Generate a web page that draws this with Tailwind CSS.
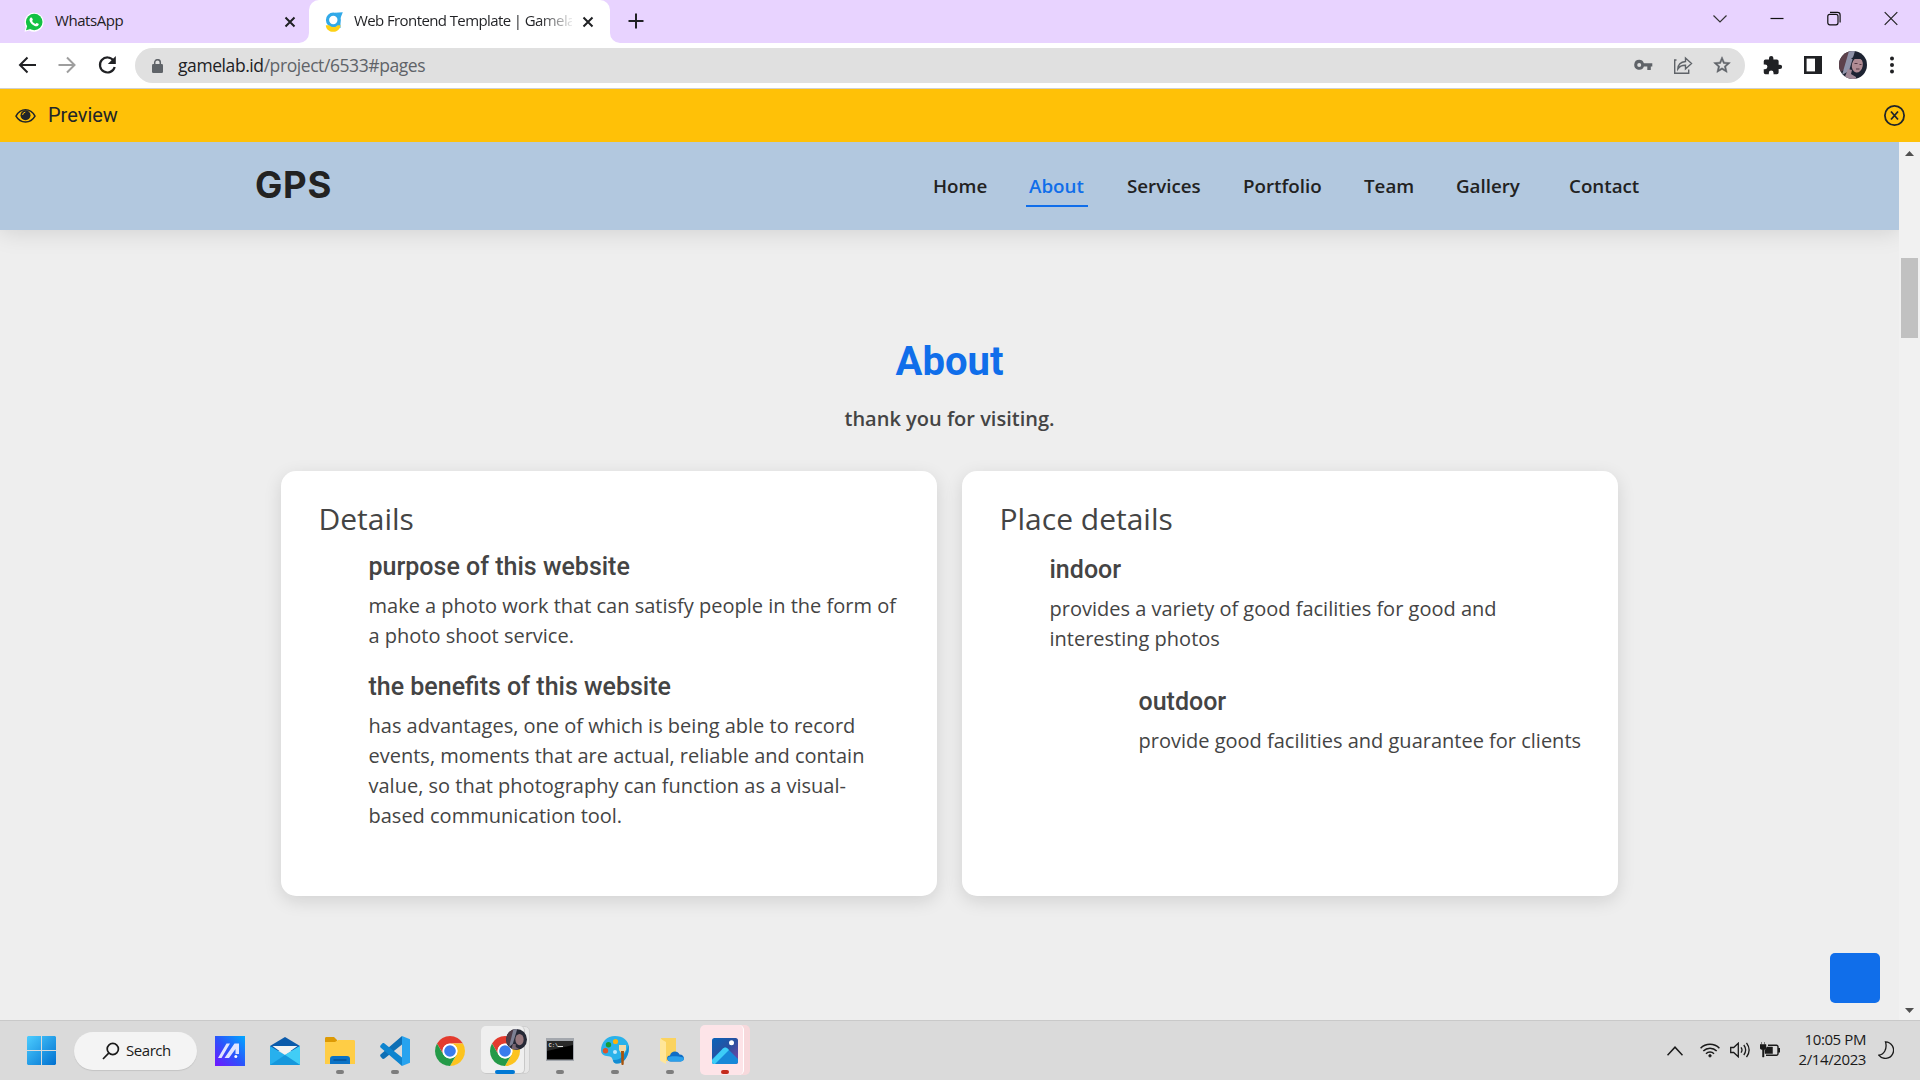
<!DOCTYPE html>
<html lang="en">
<head>
<meta charset="utf-8">
<title>Web Frontend Template | Gamelab</title>
<script src="https://cdn.jsdelivr.net/npm/@tailwindcss/browser@4"></script>
</head>
<body class="w-[1920px] h-[1080px] overflow-hidden flex flex-col bg-[#eeeeee] font-['Open_Sans',sans-serif] text-[#444444]">

<!-- Tab strip -->
<header class="h-[43px] shrink-0 bg-[#e8d3ff] flex text-[#1f2124] text-[15px] tracking-[-0.6px]">
  <div class="w-[309px] flex items-center pl-6 pr-[13px]">
    <svg class="size-5 shrink-0" viewBox="0 0 20 20"><path d="M.5 19.700 1.800 14.800A9.500 9.500 0 1 1 5.300 18.400Z" fill="#fff"/><circle cx="10.200" cy="10" r="8.300" fill="#12c143"/><path d="M2 18.300 3.300 13.500 6.500 16.900Z" fill="#12c143"/><path d="M6.300 5.900c.6-.7 1.500-.6 1.800 0l.7 1.600c.2.500-.7 1.200-.6 1.500.6 1.300 1.700 2.300 3.100 2.900.5.100 1-1.200 1.500-.9l1.700.8c.7.400-.1 2.200-1.500 2.500-2.600.5-7.500-3.300-7.500-6.600 0-.7.300-1.300.8-1.800Z" fill="#fff"/></svg>
    <span class="ml-[11px] flex-1 pb-[2px] tracking-[-0.45px]">WhatsApp</span>
    <svg class="size-3" viewBox="0 0 12 12" fill="none" stroke="#202124" stroke-width="2"><path d="m1.500 1.500 9 9m0-9-9 9"/></svg>
  </div>
  <div class="relative w-[301px] bg-white rounded-t-[10px] flex items-center pl-4 pr-4">
    <svg class="absolute -left-[10px] bottom-0 size-[10px]" viewBox="0 0 10 10"><path d="M10 0v10H0A10 10 0 0 0 10 0Z" fill="#fff"/></svg>
    <svg class="absolute -right-[10px] bottom-0 size-[10px]" viewBox="0 0 10 10"><path d="M0 0v10h10A10 10 0 0 1 0 0Z" fill="#fff"/></svg>
    <svg class="w-[18px] h-5 shrink-0" viewBox="0 0 18 20"><circle cx="8.300" cy="8" r="5.800" fill="none" stroke="#31a9e8" stroke-width="3.200"/><path d="M10 .8 17.800.3 15.500 6 13 3Z" fill="#31a9e8"/><path d="M13 4h2.500v12H13Z" fill="#31a9e8"/><path d="M.8 13.200h3.400c2.400 2.500 6.400 2.500 8.600 0h2.700c-.2 4-3.400 6.600-7.300 6.600S1 17.300.8 13.200Z" fill="#fdd116"/></svg>
    <span class="ml-[11px] w-[219px] pb-[2px] overflow-hidden whitespace-nowrap bg-linear-to-r from-[#202124] from-85% to-[#202124]/10 bg-clip-text text-transparent">Web Frontend Template | Gamela</span>
    <svg class="ml-[10px] size-3 shrink-0" viewBox="0 0 12 12" fill="none" stroke="#202124" stroke-width="2"><path d="m1.500 1.500 9 9m0-9-9 9"/></svg>
  </div>
  <svg class="ml-[18px] mt-[13px] size-4" viewBox="0 0 16 16" stroke="#202124" stroke-width="2"><path d="M8 .5v15M.5 8h15"/></svg>
  <div class="ml-auto flex pt-[11px] pr-[22px] gap-[43px]">
    <svg class="w-[14px] h-4" viewBox="0 0 14 16" fill="none" stroke="#333" stroke-width="1.200"><path d="m.5 4.500 6.500 6.500 6.500-6.500"/></svg>
    <svg class="w-[14px] h-4" viewBox="0 0 14 16" stroke="#111" stroke-width="1.200"><path d="M.5 7.500h13"/></svg>
    <svg class="w-[14px] h-4" viewBox="0 0 14 16" fill="none" stroke="#111" stroke-width="1.200"><rect x=".8" y="3.300" width="10.200" height="10.500" rx="2"/><path d="M3 1.300h7.500a2.600 2.600 0 0 1 2.600 2.600V11.500"/></svg>
    <svg class="w-[14px] h-4" viewBox="0 0 14 16" stroke="#222" stroke-width="1.200"><path d="m.7 1.200 12.600 12.600m0-12.600L.7 13.800"/></svg>
  </div>
</header>

<!-- Address bar -->
<div class="h-[46px] shrink-0 bg-white border-b border-[#cfcfcf] flex items-center pl-[17px] pr-[25px] pb-[1px]">
  <svg class="size-5" viewBox="0 0 20 20" fill="none" stroke="#202124" stroke-width="2"><path d="M19 10H3.500M10.500 2.500 3 10l7.500 7.500"/></svg>
  <svg class="ml-5 size-5" viewBox="0 0 20 20" fill="none" stroke="#9e9e9e" stroke-width="2"><path d="M1.500 10H17M10 2.500l7.500 7.500-7.500 7.500"/></svg>
  <svg class="ml-5 size-5" viewBox="0 0 20 20"><path d="M16.500 5.500A7.500 7.500 0 1 0 17.700 12" fill="none" stroke="#202124" stroke-width="2.200"/><path d="M18.800 1v8h-8Z" fill="#202124"/></svg>
  <div class="ml-[18px] w-[1610px] h-[35px] rounded-full bg-[#e0e0e0] flex items-center pl-[17px] pr-[13px]">
    <svg class="w-[11px] h-[14px] mt-[1px]" viewBox="0 0 11 14"><path d="M2.700 6V3.500a2.800 2.800 0 0 1 5.600 0V6" fill="none" stroke="#5f6368" stroke-width="1.500"/><rect y="5" width="11" height="9" rx="1.200" fill="#5f6368"/></svg>
    <span class="ml-[15px] pt-[1px] text-[17.500px] tracking-[-0.42px] text-[#202124]">gamelab.id<span class="text-[#5f6368]">/project/6533#pages</span></span>
    <svg class="ml-auto w-[19px] h-5" viewBox="0 0 19 20"><path fill-rule="evenodd" d="M5.200 4.800a5 5 0 0 1 4.700 3.400H18.300v3.400h-1.500V15h-3.500v-3.400H9.900A5 5 0 1 1 5.200 4.800Zm0 3.200a2 2 0 1 0 0 4 2 2 0 0 0 0-4Z" fill="#5f6368"/></svg>
    <svg class="ml-5 w-5 h-5" viewBox="0 0 20 20" fill="none" stroke="#5f6368" stroke-width="1.400"><path d="M3.500 5H1.700v13.200h14V14.500"/><path d="M12.500 3v3.500C8 7 5 9.500 4.800 14c2-3 4.500-3.800 7.700-3.700V14l6-5.500Z"/></svg>
    <svg class="ml-[19px] size-5" viewBox="0 0 24 24" fill="#5f6368"><path d="m22 9.240-7.190-.62L12 2 9.190 8.630 2 9.240l5.460 4.730L5.820 21 12 17.270 18.180 21l-1.630-7.030L22 9.240ZM12 15.400l-3.760 2.270 1-4.280-3.320-2.880 4.380-.38L12 6.100l1.710 4.040 4.380.38-3.320 2.880 1 4.280L12 15.400Z" stroke="#5f6368" stroke-width=".6"/></svg>
  </div>
  <svg class="ml-[17px] size-[21px]" viewBox="0 0 24 24" fill="#202124"><path d="M20.500 11H19V7a2 2 0 0 0-2-2h-4V3.500a2.500 2.500 0 0 0-5 0V5H4a2 2 0 0 0-2 2v3.800h1.500a2.700 2.700 0 0 1 0 5.400H2V20a2 2 0 0 0 2 2h3.800v-1.500a2.700 2.700 0 0 1 5.400 0V22H17a2 2 0 0 0 2-2v-4h1.500a2.500 2.500 0 0 0 0-5Z"/></svg>
  <svg class="ml-[21px] w-[18px] h-[18px]" viewBox="0 0 18 18"><rect x="1.300" y="1.300" width="15.400" height="15.400" fill="none" stroke="#202124" stroke-width="2.600"/><rect x="11" width="7" height="18" fill="#202124"/></svg>
  <svg class="ml-[17px] size-7" viewBox="0 0 28 28"><defs><clipPath id="av"><circle cx="14" cy="14" r="14"/></clipPath></defs><g clip-path="url(#av)"><rect width="28" height="28" fill="#1d2332"/><path d="M0 0h15L8 17 0 22Z" fill="#5d414b"/><path d="M10 0h6L10 20 3 24Z" fill="#8f92a8"/><ellipse cx="18.500" cy="14" rx="5.500" ry="7.500" fill="#b08b93" transform="rotate(10 18 13)"/><path d="M12 8Q18 1 25 9L21 8 16 8Z" fill="#1d2332"/><path d="M5 28 9 18l4 1-1 4 5 3v2Z" fill="#a08896"/><path d="M15.500 12.500h3m2 1h2M17 18h3.500" stroke="#553943" stroke-width="1.200"/></g></svg>
  <svg class="ml-auto w-[6px] h-[18px]" viewBox="0 0 6 18" fill="#202124"><circle cx="3" cy="2.500" r="2"/><circle cx="3" cy="9" r="2"/><circle cx="3" cy="15.500" r="2"/></svg>
</div>

<!-- Preview banner -->
<div class="h-[53px] shrink-0 bg-[#ffc107] flex items-center pl-[15px] pr-[15px] text-[#212529]">
  <svg class="w-[21px] h-4" viewBox="0 0 21 16"><path d="M1 8.200C5.500-.3 15.500-.3 20 8.200 15.500 16 5.500 16 1 8.200Z" fill="none" stroke="#212529" stroke-width="1.500"/><circle cx="10.500" cy="7.300" r="5" fill="#212529"/><path d="M7.600 7a3 3 0 0 1 2.700-2.800" fill="none" stroke="#ffc107" stroke-width="1"/></svg>
  <span class="ml-[12px] pb-[2px] font-['Roboto',sans-serif] text-[20px]">Preview</span>
  <svg class="ml-auto size-[21px]" viewBox="0 0 21 21" fill="none" stroke="#212529" stroke-width="1.800"><circle cx="10.500" cy="10.500" r="9.600"/><path d="m7 6.500 7 8m0-8-7 8"/></svg>
</div>

<!-- Previewed site -->
<div class="h-[878px] shrink-0 flex">
  <div class="relative w-[1899px] overflow-hidden flex flex-col">
    <nav class="h-[88px] shrink-0 bg-[#b2c8df] shadow-[0_0_24px_rgba(0,0,0,0.15)] flex items-center pl-[255px] text-[#222222]">
      <div class="w-[678px] pb-[2px] font-['Inter',sans-serif] font-bold text-[36.500px] leading-none tracking-[0.7px]">GPS</div>
      <div class="flex h-[50px] items-start text-[18.750px] font-semibold leading-[50px] whitespace-nowrap">
        <a class="w-[96px]">Home</a>
        <a class="relative w-[98px] text-[#106eea]">About<span class="absolute -left-[3px] top-[44px] w-[62px] h-[2px] bg-[#106eea]"></span></a>
        <a class="w-[116px]">Services</a>
        <a class="w-[121px]">Portfolio</a>
        <a class="w-[92px]">Team</a>
        <a class="w-[113px]">Gallery</a>
        <a>Contact</a>
      </div>
    </nav>
    <main class="flex-1 flex flex-col items-center pt-[108px]">
      <h2 class="font-['Roboto',sans-serif] font-bold text-[40px] leading-[48px] text-[#106eea]">About</h2>
      <p class="mt-[18px] text-[20px] leading-[30px] font-semibold">thank you for visiting.</p>
      <div class="mt-[37px] flex gap-[25px]">
        <section class="w-[656px] h-[425px] rounded-[15px] bg-white shadow-[0_5px_18px_rgba(0,0,0,0.12)] pl-[37.500px] pt-[30px]">
          <h3 class="text-[30px] leading-[36px]">Details</h3>
          <div class="pl-[50px] pt-[15px] w-[592px]">
            <h4 class="font-['Roboto',sans-serif] font-medium text-[25px] leading-[30px]">purpose of this website</h4>
            <p class="mt-[9px] text-[20px] leading-[30px] whitespace-nowrap">make a photo work that can satisfy people in the form of<br>a photo shoot service.</p>
            <h4 class="mt-[21px] font-['Roboto',sans-serif] font-medium text-[25px] leading-[30px]">the benefits of this website</h4>
            <p class="mt-[9px] text-[20px] leading-[30px] whitespace-nowrap">has advantages, one of which is being able to record<br>events, moments that are actual, reliable and contain<br>value, so that photography can function as a visual-<br>based communication tool.</p>
          </div>
        </section>
        <section class="w-[656px] h-[425px] rounded-[15px] bg-white shadow-[0_5px_18px_rgba(0,0,0,0.12)] pl-[37.500px] pt-[30px]">
          <h3 class="text-[30px] leading-[36px]">Place details</h3>
          <div class="pl-[50px] pt-[18px]">
            <h4 class="font-['Roboto',sans-serif] font-medium text-[25px] leading-[30px]">indoor</h4>
            <p class="mt-[9px] text-[20px] leading-[30px] whitespace-nowrap">provides a variety of good facilities for good and<br>interesting photos</p>
            <div class="pl-[89px] pt-[33px]">
              <h4 class="font-['Roboto',sans-serif] font-medium text-[25px] leading-[30px]">outdoor</h4>
              <p class="mt-[9px] text-[20px] leading-[30px] whitespace-nowrap">provide good facilities and guarantee for clients</p>
            </div>
          </div>
        </section>
      </div>
    </main>
    <div class="absolute right-[19px] bottom-[17px] size-[50px] rounded-[5px] bg-[#106eea]"></div>
  </div>
  <div class="w-[21px] bg-[#f1f1f1] flex flex-col items-center pt-[9px] pb-[7px]">
    <svg class="w-[9px] h-[5px]" viewBox="0 0 9 5"><path d="M0 5 4.500 0 9 5Z" fill="#505050"/></svg>
    <div class="mt-[102px] w-[17px] h-20 bg-[#c1c1c1]"></div>
    <svg class="mt-auto w-[9px] h-[5px]" viewBox="0 0 9 5"><path d="M0 0h9L4.500 5Z" fill="#505050"/></svg>
  </div>
</div>

<!-- Taskbar -->
<footer class="h-[60px] shrink-0 bg-[#dadada] border-t border-[#c9c9c9] flex items-center text-[#1a1a1a]">
  <svg class="ml-[27px] size-[29px]" viewBox="0 0 29 29"><defs><linearGradient id="w" x1="0" y1="0" x2="29" y2="29" gradientUnits="userSpaceOnUse"><stop stop-color="#4ccdff"/><stop offset="1" stop-color="#0070d0"/></linearGradient></defs><path fill="url(#w)" d="M1 0h13v14H0V1ZM15 0h13l1 1v13H15ZM0 15h14v14H1l-1-1ZM15 15h14v13l-1 1H15Z"/></svg>
  <div class="ml-[18px] w-[123px] h-[38px] rounded-full bg-[#f4f4f4] shadow-[0_1px_1px_rgba(0,0,0,0.1)] flex items-center pl-[28px]">
    <svg class="size-[18px]" viewBox="0 0 18 18" fill="none" stroke="#1a1a1a" stroke-width="1.700"><circle cx="10.800" cy="7" r="5.600"/><path d="M6.700 11.200 1 17"/></svg>
    <span class="ml-[6px] text-[15px] tracking-[-0.45px]">Search</span>
  </div>
  <div class="ml-[5.500px] flex h-[59px] items-center">
    <div class="relative w-[55px] h-[59px] flex items-center justify-center">
      <svg class="size-[30px]" viewBox="0 0 30 30"><defs><linearGradient id="ma" x1="0" y1="1" x2="1" y2="0"><stop stop-color="#7114ff"/><stop offset=".5" stop-color="#2a55fb"/><stop offset="1" stop-color="#00a8ff"/></linearGradient></defs><rect width="30" height="30" fill="url(#ma)"/><path d="M3 22 11.500 7.500H15L6.500 22ZM9.500 22 19.500 7.500H24V18h-3.500v-5L14 22ZM12 7.500" fill="#e0e4ff"/><circle cx="20.800" cy="20.500" r="1.500" fill="#fff"/></svg>
    </div>
    <div class="relative w-[55px] h-[59px] flex items-center justify-center">
      <svg class="w-[30px] h-7" viewBox="0 0 30 28"><path d="M0 9 15 0l15 9v5H0Z" fill="#0b5bab"/><path d="M2.500 9h25L15 18Z" fill="#f3f3f3"/><path d="M0 9v19h30V9L15 18Z" fill="#27b0ee"/><path d="M30 9v19L15 18Z" fill="#41cdf6"/><path d="M0 28h30L15 18Z" fill="#1697dc"/></svg>
    </div>
    <div class="relative w-[55px] h-[59px] flex items-center justify-center">
      <svg class="w-[30px] h-[27px]" viewBox="0 0 30 27"><path d="M0 1.500C0 .5.500 0 1.500 0H9l3 3v4H0Z" fill="#dd9a05"/><path d="M0 5h10l3-2h15.500c1 0 1.500.5 1.500 1.500V27H0Z" fill="#ffcd45"/><path d="M5 27v-5c0-2 1-3 3-3h14c2 0 3 1 3 3v5Z" fill="#0b72c6"/><path d="M8.500 23h13" stroke="#064d8f" stroke-width="1.300"/></svg>
      <span class="absolute bottom-[6px] w-2 h-1 rounded-full bg-[#7d7d7d]"></span>
    </div>
    <div class="relative w-[55px] h-[59px] flex items-center justify-center">
      <svg class="size-[30px]" viewBox="0 0 30 30"><path d="M22 8.500 4.500 22.500C3.500 23.300 2.500 23 1.800 22L.5 20.500c-.5-.8-.5-1.500.3-2.200L22 0Z" fill="#0e6fb5"/><path d="M22 21.500 4.500 7.500C3.500 6.700 2.500 7 1.800 8L.5 9.500c-.5.8-.5 1.500.3 2.200L22 30Z" fill="#0e84cf"/><path d="M22 0 30 3.300v23.400L22 30Z" fill="#27a3ef"/></svg>
      <span class="absolute bottom-[6px] w-2 h-1 rounded-full bg-[#7d7d7d]"></span>
    </div>
    <div class="relative w-[55px] h-[59px] flex items-center justify-center">
      <svg class="size-[30px]" viewBox="0 0 48 48"><circle cx="24" cy="24" r="23" fill="#fff"/><path d="M24 12h20.780A24 24 0 0 0 3.220 12l10.390 18A12 12 0 0 1 24 12Z" fill="#e33b2e"/><path d="M34.390 30 24 48a24 24 0 0 0 20.780-36H24a12 12 0 0 1 10.390 18Z" fill="#fcc31e"/><path d="M13.610 30 3.220 12A24 24 0 0 0 24 48l10.390-18a12 12 0 0 1-20.780 0Z" fill="#249a48"/><circle cx="24" cy="24" r="11.800" fill="#fff"/><circle cx="24" cy="24" r="9.300" fill="#3a7cec"/></svg>
    </div>
    <div class="relative w-[55px] h-[59px] flex items-center justify-center">
      <span class="absolute left-[5px] top-[5px] w-[47px] h-[48px] rounded-[5px] bg-[#e7e7e7] border border-[#cfcfcf]"></span>
      <span class="absolute left-[3px] top-[5px] w-[44px] h-[48px] rounded-[5px] bg-[#efefef] border-r border-b border-[#c8c8c8]"></span>
      <svg class="relative size-[30px]" viewBox="0 0 48 48"><circle cx="24" cy="24" r="23" fill="#fff"/><path d="M24 12h20.780A24 24 0 0 0 3.220 12l10.390 18A12 12 0 0 1 24 12Z" fill="#e33b2e"/><path d="M34.390 30 24 48a24 24 0 0 0 20.780-36H24a12 12 0 0 1 10.390 18Z" fill="#fcc31e"/><path d="M13.610 30 3.220 12A24 24 0 0 0 24 48l10.390-18a12 12 0 0 1-20.780 0Z" fill="#249a48"/><circle cx="24" cy="24" r="11.800" fill="#fff"/><circle cx="24" cy="24" r="9.300" fill="#3a7cec"/></svg>
      <svg class="absolute left-[28px] top-[8px] size-[21px]" viewBox="0 0 28 28"><g clip-path="url(#av)"><rect width="28" height="28" fill="#262936"/><path d="M0 0h12L6 20 0 22Z" fill="#4f3d48"/><path d="M10 0h5L9 20 4 24Z" fill="#7d8094"/><ellipse cx="18" cy="14" rx="5.500" ry="7.500" fill="#97787e"/><path d="M7 28 9 20l4 0v4l5 3Z" fill="#74636f"/></g></svg>
      <span class="absolute left-[17px] bottom-[6px] w-5 h-1 rounded-full bg-[#0078d4]"></span>
    </div>
    <div class="relative w-[55px] h-[59px] flex items-center justify-center">
      <svg class="w-7 h-[23px] mb-[2px]" viewBox="0 0 28 23"><rect width="28" height="23" fill="#a4a8ae"/><rect x="1" y="3" width="26" height="18.500" fill="#000"/><path d="M1 3h26v4L1 13Z" fill="#292929"/><text x="2.500" y="8.500" font-family="Liberation Mono" font-size="5.500" font-weight="bold" fill="#ddd">C:\</text><path d="M12 8.500h5" stroke="#ddd"/></svg>
      <span class="absolute bottom-[6px] w-2 h-1 rounded-full bg-[#7d7d7d]"></span>
    </div>
    <div class="relative w-[55px] h-[59px] flex items-center justify-center">
      <svg class="w-7 h-[29px]" viewBox="0 0 28 29"><path d="M14 0c8 0 14 4.500 14 12 0 8-5 15.500-12 15.500-5 0-3.500-5-6-6.500S0 21 0 14.500C0 6 6 0 14 0Z" fill="#2ab2ea"/><path d="M27.500 9c1.500 8-3 18.500-11.500 18.500-3 0-3.600-1.700-4-3.500 7 1 13-5 15.500-15Z" fill="#148cd2"/><circle cx="7.500" cy="8.700" r="2.700" fill="#169b36"/><circle cx="14.500" cy="5.500" r="2.600" fill="#fbb30d"/><circle cx="4.500" cy="14.700" r="2.700" fill="#d9542b"/><circle cx="14" cy="16" r="2" fill="#bfe9fb"/><path d="M18 9h7v5l-2 3h-3l-2-3Z" fill="#f0d9a8"/><path d="M20 15h3l-.3 13c0 1.300-2.300 1.300-2.300 0Z" fill="#a8540d"/></svg>
      <span class="absolute bottom-[6px] w-2 h-1 rounded-full bg-[#7d7d7d]"></span>
    </div>
    <div class="relative w-[55px] h-[59px] flex items-center justify-center">
      <svg class="w-6 h-[26px] ml-[3px]" viewBox="0 0 24 26"><path d="M1 0h15v23H6Z" fill="#fbd35f"/><path d="M0 .5 6 4v22L.8 23C.3 22.700 0 22 0 21.500Z" fill="#ffe699"/><path d="M11 23.500c-5 0-5-6-1-6 1-5 8-5 9.500-1 5.500 0 6 7 1 7Z" fill="#0f6dc6"/><path d="M11 23.500c-3 0-4-2.500-3-4 4-2 10-1 15.500 0 .8 2-.5 4-3 4Z" fill="#2ba0ea"/></svg>
      <span class="absolute bottom-[6px] w-2 h-1 rounded-full bg-[#7d7d7d]"></span>
    </div>
    <div class="relative w-[55px] h-[59px] flex items-center justify-center">
      <span class="absolute left-[8px] top-[4px] w-[44px] h-[50px] rounded-[5px] bg-[#f7d9dc]"></span>
      <span class="absolute left-[2px] top-[4px] w-[44px] h-[50px] rounded-[5px] bg-[#fde4e8] border-r border-white"></span>
      <svg class="relative size-[26px]" viewBox="0 0 26 26"><defs><linearGradient id="ph" x1="0" y1="0" x2="1" y2="1"><stop stop-color="#0963ba"/><stop offset=".5" stop-color="#29509f"/><stop offset="1" stop-color="#8046a8"/></linearGradient><clipPath id="pc"><rect width="26" height="26" rx="2.500"/></clipPath></defs><g clip-path="url(#pc)"><rect width="26" height="26" fill="url(#ph)"/><path d="M-1 22 11 10.500c1.500-1.500 3-1.500 4.500 0L27 22v5H-1Z" fill="#1788d8"/><path d="M0 22 11 10.500c1.500-1.500 3-1.500 4.500 0L17 12 3 26H0Z" fill="#3dcdf7"/><circle cx="19.500" cy="4.800" r="2.500" fill="#fff"/></g></svg>
      <span class="absolute bottom-[6px] w-2 h-1 rounded-full bg-[#c42b1c]"></span>
    </div>
  </div>
  <div class="ml-auto flex items-center h-[59px]">
    <svg class="w-4 h-[10px]" viewBox="0 0 16 10" fill="none" stroke="#1a1a1a" stroke-width="1.500"><path d="m.5 9.200 7.500-8 7.500 8"/></svg>
    <svg class="ml-[17px] mb-[1px] w-5 h-4" viewBox="0 0 20 16" fill="none" stroke="#1a1a1a" stroke-width="1.500"><path d="M.6 6.200a13.200 13.200 0 0 1 18.800 0M3.300 9a9.400 9.400 0 0 1 13.400 0M6 11.700a5.600 5.600 0 0 1 8 0"/><circle cx="10" cy="13.800" r="1.300" fill="#1a1a1a" stroke-width=".6"/></svg>
    <svg class="ml-[10px] mb-[1px] w-5 h-4" viewBox="0 0 20 16" fill="none" stroke="#1a1a1a" stroke-width="1.300"><path d="M.7 5.500h3L8.300 1.200v13.600L3.700 10.500h-3ZM11 5.300q2 2.700 0 5.400M13.800 3q3.700 5 0 10M16.500.8q5.300 7.200 0 14.400"/></svg>
    <svg class="ml-[10px] mb-[2px] w-5 h-4" viewBox="0 0 20 16"><path d="M8 3.200h8.500a1.500 1.500 0 0 1 1.500 1.500v7.100a1.500 1.500 0 0 1-1.500 1.500H6" fill="none" stroke="#1a1a1a" stroke-width="1.400"/><rect x="18" y="6" width="2" height="4.500" fill="#1a1a1a"/><path d="M7 5h5.500v6.500H5V8ZM1.500 0v2.500M4.500 0v2.500M0 2.500h6v4L4 8v7H2.500V8L0 6.500Z" fill="#1a1a1a" stroke="#1a1a1a" stroke-width=".5"/></svg>
    <div class="w-[86px] text-right text-[15px] leading-5 tracking-[-0.4px] mb-[3px] whitespace-nowrap">10:05 PM<br>2/14/2023</div>
    <svg class="ml-3 mr-[26px] mb-[1px] w-4 h-[18px]" viewBox="0 0 16 18" fill="none" stroke="#1a1a1a" stroke-width="1.300"><path d="M7.500.8A8.300 8.300 0 1 1 .7 14.200C6 13.500 9.500 8 7.500.8Z"/></svg>
  </div>
</footer>
</body>
</html>
